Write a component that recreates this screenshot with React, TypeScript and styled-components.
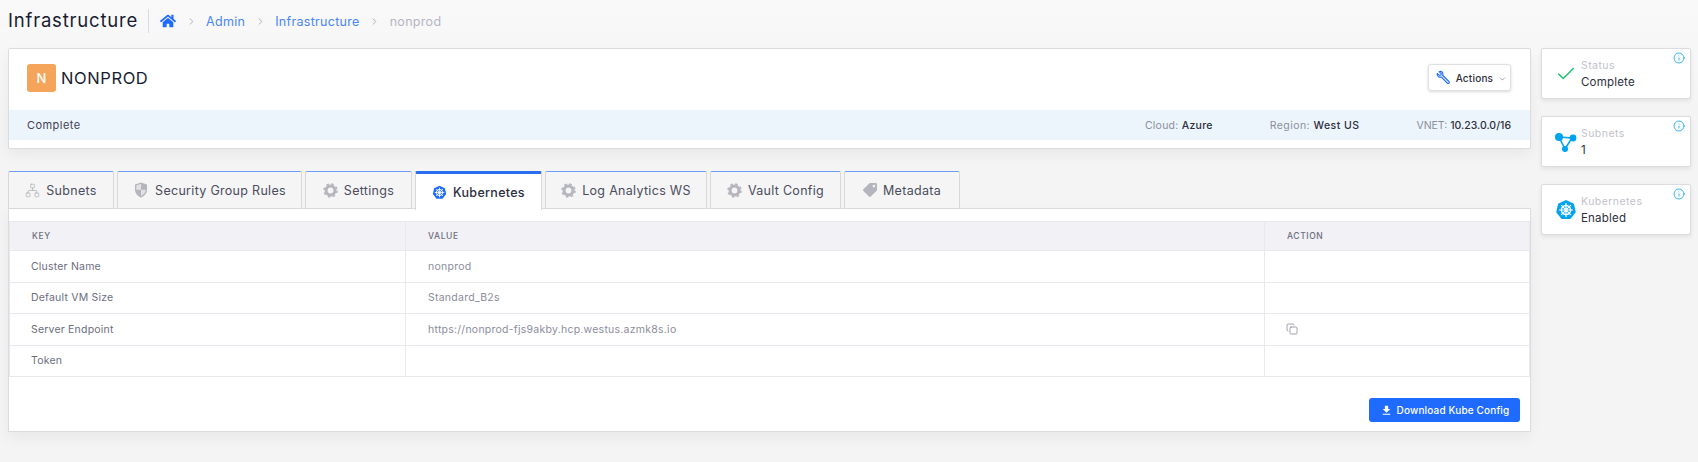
import React from 'react';
import styled, { createGlobalStyle } from 'styled-components';
import { FaHome, FaTag } from 'react-icons/fa';
import { MdFileDownload } from 'react-icons/md';
import { Check, ChevronDown, ChevronRight, Copy, Info, Network } from 'lucide-react';

const GlobalStyle = createGlobalStyle`
  html, body {
    margin: 0;
    padding: 0;
    background: #f5f5f5;
    font-family: Inter, "Open Sans", sans-serif;
    color: #3f4254;
  }
`;

const KubeIcon = ({ size }: { size: number }) => (
  <svg width={size} height={size} viewBox="0 0 24 24">
    <path d="M12 1l8.6 4.1 2.1 9.3-5.9 7.5H7.2L1.3 14.4l2.1-9.3z" fill="currentColor" />
    <circle cx="12" cy="12" r="5" fill="none" stroke="#fff" strokeWidth="1.6" />
    <path
      d="M12 4.8v14.4M5 12h14M7 7l10 10M17 7L7 17"
      stroke="#fff"
      strokeWidth="1.3"
      strokeLinecap="round"
    />
    <circle cx="12" cy="12" r="1.4" fill="#fff" />
  </svg>
);

const GearIcon = () => (
  <svg width="15" height="15" viewBox="0 0 16 16" fill="none" stroke="#b5b5bd">
    <circle cx="8" cy="8" r="4.700" strokeWidth="3.200" />
    <circle cx="8" cy="8" r="6.900" strokeWidth="1.600" strokeDasharray="2.700 2.720" />
  </svg>
);

const ShieldIcon = () => (
  <svg width="16" height="16" viewBox="0 0 16 16">
    <path d="M8 0.5L2 2.5v5c0 3.800 2.600 6.600 6 8 3.400-1.400 6-4.200 6-8v-5z" fill="#b5b5bd" />
    <path d="M8 1.800v6H3.300V3.400zM8 7.800h4.700c-.2 2.800-2 4.900-4.700 6.100z" fill="#e2e2e6" />
  </svg>
);

const SubnetsIcon = () => (
  <svg width="24" height="24" viewBox="0 0 24 24">
    <path d="M5 7l13 1-7 11z" fill="none" stroke="#00a3ef" strokeWidth="1.600" />
    <circle cx="5" cy="7" r="4" fill="#00a3ef" />
    <circle cx="19" cy="8" r="3.400" fill="#00a3ef" />
    <circle cx="11" cy="19" r="3" fill="#00a3ef" />
  </svg>
);

const WrenchIcon = () => (
  <svg width="20" height="20" viewBox="0 0 17 17" fill="none">
    <path
      d="M1.500 3.200L4 5.400l1.600-.4.500-1.600-2.400-2.200c1.700-.6 3.500 0 4.100 1.400.4 1 .3 1.900-.1 2.700l7.200 7.200c.7.700.7 1.500.2 2-.6.600-1.400.5-2-.1L6 7.300c-1 .4-2.200.3-3.200-.3C1.600 6.200 1.100 4.700 1.500 3.200z"
      fill="#dfe7ff"
      stroke="#1f6bff"
      strokeWidth="1.300"
      strokeLinejoin="round"
    />
  </svg>
);

type Tab = { label: string; icon: React.ReactNode; width: number; active?: boolean };

const tabs: Tab[] = [
  { label: 'Subnets', icon: <Network size={15} strokeWidth={1.3} />, width: 106 },
  { label: 'Security Group Rules', icon: <ShieldIcon />, width: 185 },
  { label: 'Settings', icon: <GearIcon />, width: 107 },
  { label: 'Kubernetes', icon: <KubeIcon size={15} />, width: 127, active: true },
  { label: 'Log Analytics WS', icon: <GearIcon />, width: 162 },
  { label: 'Vault Config', icon: <GearIcon />, width: 131 },
  { label: 'Metadata', icon: <FaTag size={14} style={{ transform: 'scaleX(-1)' }} />, width: 116 },
];

const rows = [
  { key: 'Cluster Name', value: 'nonprod' },
  { key: 'Default VM Size', value: 'Standard_B2s' },
  { key: 'Server Endpoint', value: 'https://nonprod-fjs9akby.hcp.westus.azmk8s.io', copy: true },
  { key: 'Token', value: '' },
];

const stats = [
  { label: 'Status', value: 'Complete', icon: <Check size={22} strokeWidth={1.6} color="#1bc56b" /> },
  { label: 'Subnets', value: '1', icon: <SubnetsIcon /> },
  { label: 'Kubernetes', value: 'Enabled', icon: <KubeIcon size={22} /> },
];

const App = () => {
  return (
    <Page>
      <GlobalStyle />
      <TopBar>
        <PageTitle>Infrastructure</PageTitle>
        <Crumbs>
          <HomeLink>
            <FaHome size={16} />
          </HomeLink>
          <Sep>
            <ChevronRight size={11} />
          </Sep>
          <Crumb>Admin</Crumb>
          <Sep>
            <ChevronRight size={11} />
          </Sep>
          <Crumb>Infrastructure</Crumb>
          <Sep>
            <ChevronRight size={11} />
          </Sep>
          <Crumb $muted>nonprod</Crumb>
        </Crumbs>
      </TopBar>
      <Content>
        <Main>
          <Summary>
            <SummaryHead>
              <NameGroup>
                <Avatar>N</Avatar>
                <Name>NONPROD</Name>
              </NameGroup>
              <ActionsButton>
                <WrenchIcon />
                <span>Actions</span>
                <ChevronDown size={12} strokeWidth={1.5} />
              </ActionsButton>
            </SummaryHead>
            <Strip>
              <StatusText>Complete</StatusText>
              <Facts>
                <Fact $spacing={0.25}>
                  Cloud: <b>Azure</b>
                </Fact>
                <Fact $spacing={0.45}>
                  Region: <b>West US</b>
                </Fact>
                <Fact $spacing={0}>
                  VNET: <b>10.23.0.0/16</b>
                </Fact>
              </Facts>
            </Strip>
          </Summary>
          <TabBar>
            {tabs.map((tab) => (
              <TabItem key={tab.label} $active={tab.active} $width={tab.width}>
                <TabIcon $active={tab.active}>{tab.icon}</TabIcon>
                {tab.label}
              </TabItem>
            ))}
          </TabBar>
          <Panel>
            <Table>
              <colgroup>
                <col style={{ width: 396 }} />
                <col style={{ width: 859 }} />
                <col />
              </colgroup>
              <thead>
                <tr>
                  <Th>KEY</Th>
                  <Th>VALUE</Th>
                  <Th>ACTION</Th>
                </tr>
              </thead>
              <tbody>
                {rows.map((row) => (
                  <tr key={row.key}>
                    <KeyCell>{row.key}</KeyCell>
                    <ValueCell>{row.value}</ValueCell>
                    <ActionCell>{row.copy && <Copy size={12} strokeWidth={1.6} />}</ActionCell>
                  </tr>
                ))}
              </tbody>
            </Table>
            <PanelFooter>
              <PrimaryButton>
                <MdFileDownload size={13} />
                Download Kube Config
              </PrimaryButton>
            </PanelFooter>
          </Panel>
        </Main>
        <Side>
          {stats.map((stat) => (
            <StatCard key={stat.label}>
              <StatIcon>{stat.icon}</StatIcon>
              <div>
                <StatLabel>{stat.label}</StatLabel>
                <StatValue>{stat.value}</StatValue>
              </div>
              <InfoMark>
                <Info size={12} strokeWidth={1.6} />
              </InfoMark>
            </StatCard>
          ))}
        </Side>
      </Content>
    </Page>
  );
};

export default App;

const Page = styled.div`
  width: 1698px;
  height: 462px;
  overflow: hidden;
  padding: 0 8px;
  box-sizing: border-box;
  background: linear-gradient(#f9f9f9, #f4f4f4 120px);
`;

const TopBar = styled.div`
  display: flex;
  align-items: center;
  height: 42px;
  margin-bottom: 6px;
`;

const PageTitle = styled.h1`
  margin: 0;
  padding-right: 10px;
  border-right: 1px solid #d8dbe6;
  height: 24px;
  line-height: 22px;
  font-size: 18.5px;
  font-weight: 400;
  letter-spacing: 0.8px;
  color: #181c32;
`;

const Crumbs = styled.nav`
  display: flex;
  align-items: center;
  margin-left: 11px;
  font-size: 12.5px;
  letter-spacing: 0.3px;
`;

const HomeLink = styled.span`
  display: flex;
  color: #1f6bff;
`;

const Sep = styled.span`
  display: flex;
  width: 30px;
  justify-content: center;
  color: #a5a8b5;
`;

const Crumb = styled.span<{ $muted?: boolean }>`
  color: ${(p) => (p.$muted ? '#b5b5c3' : '#4a86f7')};
`;

const Content = styled.div`
  display: flex;
  align-items: flex-start;
  gap: 10px;
`;

const Main = styled.div`
  flex: none;
  width: 1523px;
`;

const Summary = styled.section`
  height: 101px;
  box-sizing: border-box;
  background: #fff;
  border: 1px solid #dcdcdf;
  border-radius: 2px;
  box-shadow: 0 6px 14px rgba(0, 0, 0, 0.05);
  margin-bottom: 22px;
`;

const SummaryHead = styled.div`
  display: flex;
  justify-content: space-between;
  align-items: flex-start;
  height: 61px;
  padding: 15px 19px 0 18px;
  box-sizing: border-box;
`;

const NameGroup = styled.div`
  display: flex;
  align-items: center;
  gap: 5px;
`;

const Avatar = styled.div`
  display: flex;
  align-items: center;
  justify-content: center;
  width: 29px;
  height: 28px;
  border-radius: 3px;
  background: #f4a55a;
  color: #fff;
  font-size: 13px;
  font-weight: 500;
`;

const Name = styled.div`
  font-size: 16.5px;
  letter-spacing: 0.6px;
  color: #181c32;
`;

const ActionsButton = styled.button`
  display: flex;
  align-items: center;
  gap: 5px;
  width: 83px;
  height: 27px;
  padding: 0 3px 0 7px;
  box-sizing: border-box;
  background: #fff;
  border: 1px solid #e0e0e4;
  border-radius: 3px;
  box-shadow: 0 1px 3px rgba(0, 0, 0, 0.15);
  font: inherit;
  font-size: 10px;
  font-weight: 500;
  letter-spacing: 0.2px;
  color: #2d2f3e;
  span {
    flex: 1;
    text-align: left;
  }
  svg:last-child {
    color: #55576a;
    margin-top: 3px;
  }
`;

const Strip = styled.div`
  display: flex;
  justify-content: space-between;
  align-items: center;
  height: 30px;
  padding: 0 19px 0 18px;
  background: #edf5fc;
  font-size: 10.5px;
  color: #3f4254;
`;

const StatusText = styled.span`
  font-size: 11px;
  letter-spacing: 0.45px;
`;

const Facts = styled.div`
  display: flex;
  gap: 57px;
`;

const Fact = styled.span<{ $spacing: number }>`
  color: #8b8d9b;
  white-space: nowrap;
  letter-spacing: ${(p) => p.$spacing}px;
  b {
    font-weight: 500;
    color: #2d2f3e;
  }
`;

const TabBar = styled.div`
  position: relative;
  z-index: 1;
  display: flex;
  gap: 3px;
  height: 38px;
`;

const TabItem = styled.div<{ $active?: boolean; $width: number }>`
  display: flex;
  align-items: center;
  justify-content: center;
  gap: 6px;
  flex: none;
  width: ${(p) => p.$width}px;
  height: ${(p) => (p.$active ? '39px' : '38px')};
  box-sizing: border-box;
  background: ${(p) => (p.$active ? '#fff' : '#f5f5f6')};
  border: 1px solid #d8d8dc;
  border-bottom: ${(p) => (p.$active ? 'none' : '1px solid #d8d8dc')};
  border-top: ${(p) => (p.$active ? '3px solid #2a6ef0' : '1px solid #6e9df5')};
  border-radius: 2px 2px 0 0;
  font-size: 12.5px;
  letter-spacing: 0.3px;
  font-weight: ${(p) => (p.$active ? 500 : 400)};
  color: ${(p) => (p.$active ? '#2d2f3e' : '#4b4d5c')};
`;

const TabIcon = styled.span<{ $active?: boolean }>`
  display: flex;
  color: ${(p) => (p.$active ? '#1f6bff' : '#b5b5bd')};
`;

const Panel = styled.section`
  background: #fff;
  height: 224px;
  margin-top: -1px;
  padding-top: 12px;
  box-sizing: border-box;
  border: 1px solid #dcdcdf;
  box-shadow: 0 6px 14px rgba(0, 0, 0, 0.05);
`;

const Table = styled.table`
  width: 100%;
  table-layout: fixed;
  border-collapse: collapse;
`;

const Th = styled.th`
  height: 29px;
  padding: 0 22px;
  box-sizing: border-box;
  background: #f1f1f6;
  border: 1px solid #e8e8ef;
  text-align: left;
  font-size: 8.5px;
  font-weight: 500;
  letter-spacing: 0.6px;
  color: #6c6e7e;
`;

const KeyCell = styled.td`
  height: 31.5px;
  padding: 0 21px;
  box-sizing: border-box;
  border: 1px solid #e8e8ef;
  font-size: 10.5px;
  letter-spacing: 0.2px;
  color: #6c6e7e;
`;

const ValueCell = styled(KeyCell)`
  padding-left: 22px;
  letter-spacing: 0.25px;
  color: #8b8d9b;
`;

const ActionCell = styled(KeyCell)`
  color: #8b8d9b;
  svg {
    display: block;
  }
`;

const PanelFooter = styled.div`
  display: flex;
  justify-content: flex-end;
  padding: 21px 10px 0 0;
`;

const PrimaryButton = styled.button`
  display: flex;
  align-items: center;
  justify-content: center;
  gap: 4px;
  width: 151px;
  height: 24px;
  border: none;
  border-radius: 3px;
  background: #1f6bff;
  color: #fff;
  font: inherit;
  font-size: 10px;
  font-weight: 500;
  letter-spacing: 0.15px;
`;

const Side = styled.aside`
  display: flex;
  flex-direction: column;
  gap: 17px;
  width: 150px;
  flex: none;
`;

const StatCard = styled.div`
  position: relative;
  display: flex;
  align-items: center;
  gap: 3px;
  height: 51px;
  padding-left: 12px;
  box-sizing: border-box;
  background: #fff;
  border: 1px solid #dcdcdf;
  border-radius: 2px;
  box-shadow: 0 2px 4px rgba(0, 0, 0, 0.08);
`;

const StatIcon = styled.span`
  display: flex;
  width: 24px;
  justify-content: center;
  color: #00a3ef;
`;

const StatLabel = styled.div`
  font-size: 10.5px;
  letter-spacing: 0.45px;
  color: #c2c2cc;
  margin-bottom: 3px;
`;

const StatValue = styled.div`
  font-size: 11.5px;
  letter-spacing: 0.2px;
  color: #2d2f3e;
`;

const InfoMark = styled.span`
  position: absolute;
  top: 3px;
  right: 5px;
  display: flex;
  color: #00a3ef;
`;
